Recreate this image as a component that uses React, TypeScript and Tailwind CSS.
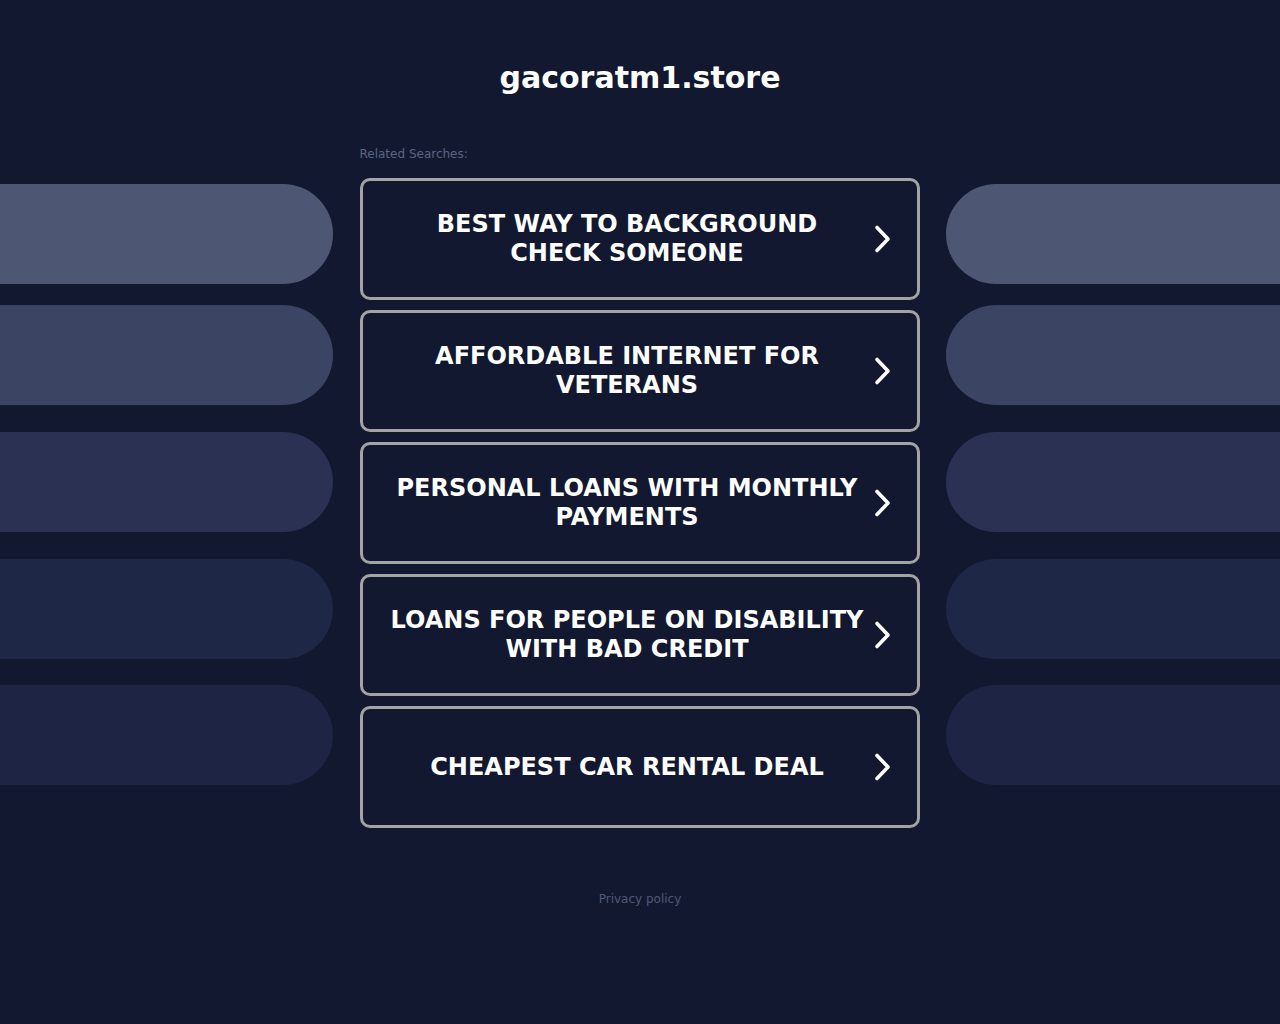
const searches = [
  'Best Way to Background Check Someone',
  'Affordable Internet for Veterans',
  'Personal Loans With Monthly Payments',
  'Loans for People on Disability With Bad Credit',
  'Cheapest Car Rental Deal',
]

const pills = [
  { color: 'bg-[#4d5773]', mt: 'mt-[38px]' },
  { color: 'bg-[#3c4463]', mt: 'mt-[21px]' },
  { color: 'bg-[#2a3152]', mt: 'mt-[27px]' },
  { color: 'bg-[#1f2747]', mt: 'mt-[27px]' },
  { color: 'bg-[#1d2444]', mt: 'mt-[26px]' },
]

const Chevron = () => (
  <svg width="20" height="30" viewBox="0 0 20 30" fill="none" className="shrink-0">
    <path
      d="M4 3.5 L15 15 L4 26.5"
      stroke="white"
      strokeWidth="3.6"
      strokeLinecap="round"
      strokeLinejoin="round"
    />
  </svg>
)

const App = () => {
  return (
    <div
      className="min-h-[1024px] w-full bg-[#121830] text-white"
      style={{ fontFamily: '"DejaVu Sans", sans-serif' }}
    >
      <h1 className="pt-[59px] text-center text-[30px] leading-[38px] font-bold">
        gacoratm1.store
      </h1>

      <div className="mt-[49px] flex w-full flex-row justify-between">
        <div className="flex w-[333px] flex-col">
          {pills.map((p, i) => (
            <div key={i} className={`${p.mt} h-[100px] w-full rounded-r-[50px] ${p.color}`} />
          ))}
        </div>

        <div className="flex w-[560px] flex-col">
          <p className="text-[12px] leading-[16px] text-[#5c6582]">Related Searches:</p>
          <div className="mt-[16px] flex flex-col gap-[10px]">
            {searches.map((s) => (
              <div
                key={s}
                className="flex h-[122px] w-full cursor-pointer flex-row items-center rounded-[10px] border-[3px] border-[#a3a3a6] bg-[#121830] pl-[26px] pr-[24px]"
              >
                <p className="mr-[7px] flex-1 text-center text-[24px] leading-[29px] font-bold uppercase">
                  {s}
                </p>
                <Chevron />
              </div>
            ))}
          </div>
        </div>

        <div className="flex w-[334px] flex-col">
          {pills.map((p, i) => (
            <div key={i} className={`${p.mt} h-[100px] w-full rounded-l-[50px] ${p.color}`} />
          ))}
        </div>
      </div>

      <p className="mt-[63px] text-center text-[12px] leading-[16px] text-[#4f5875]">
        Privacy policy
      </p>
    </div>
  )
}

export default App
